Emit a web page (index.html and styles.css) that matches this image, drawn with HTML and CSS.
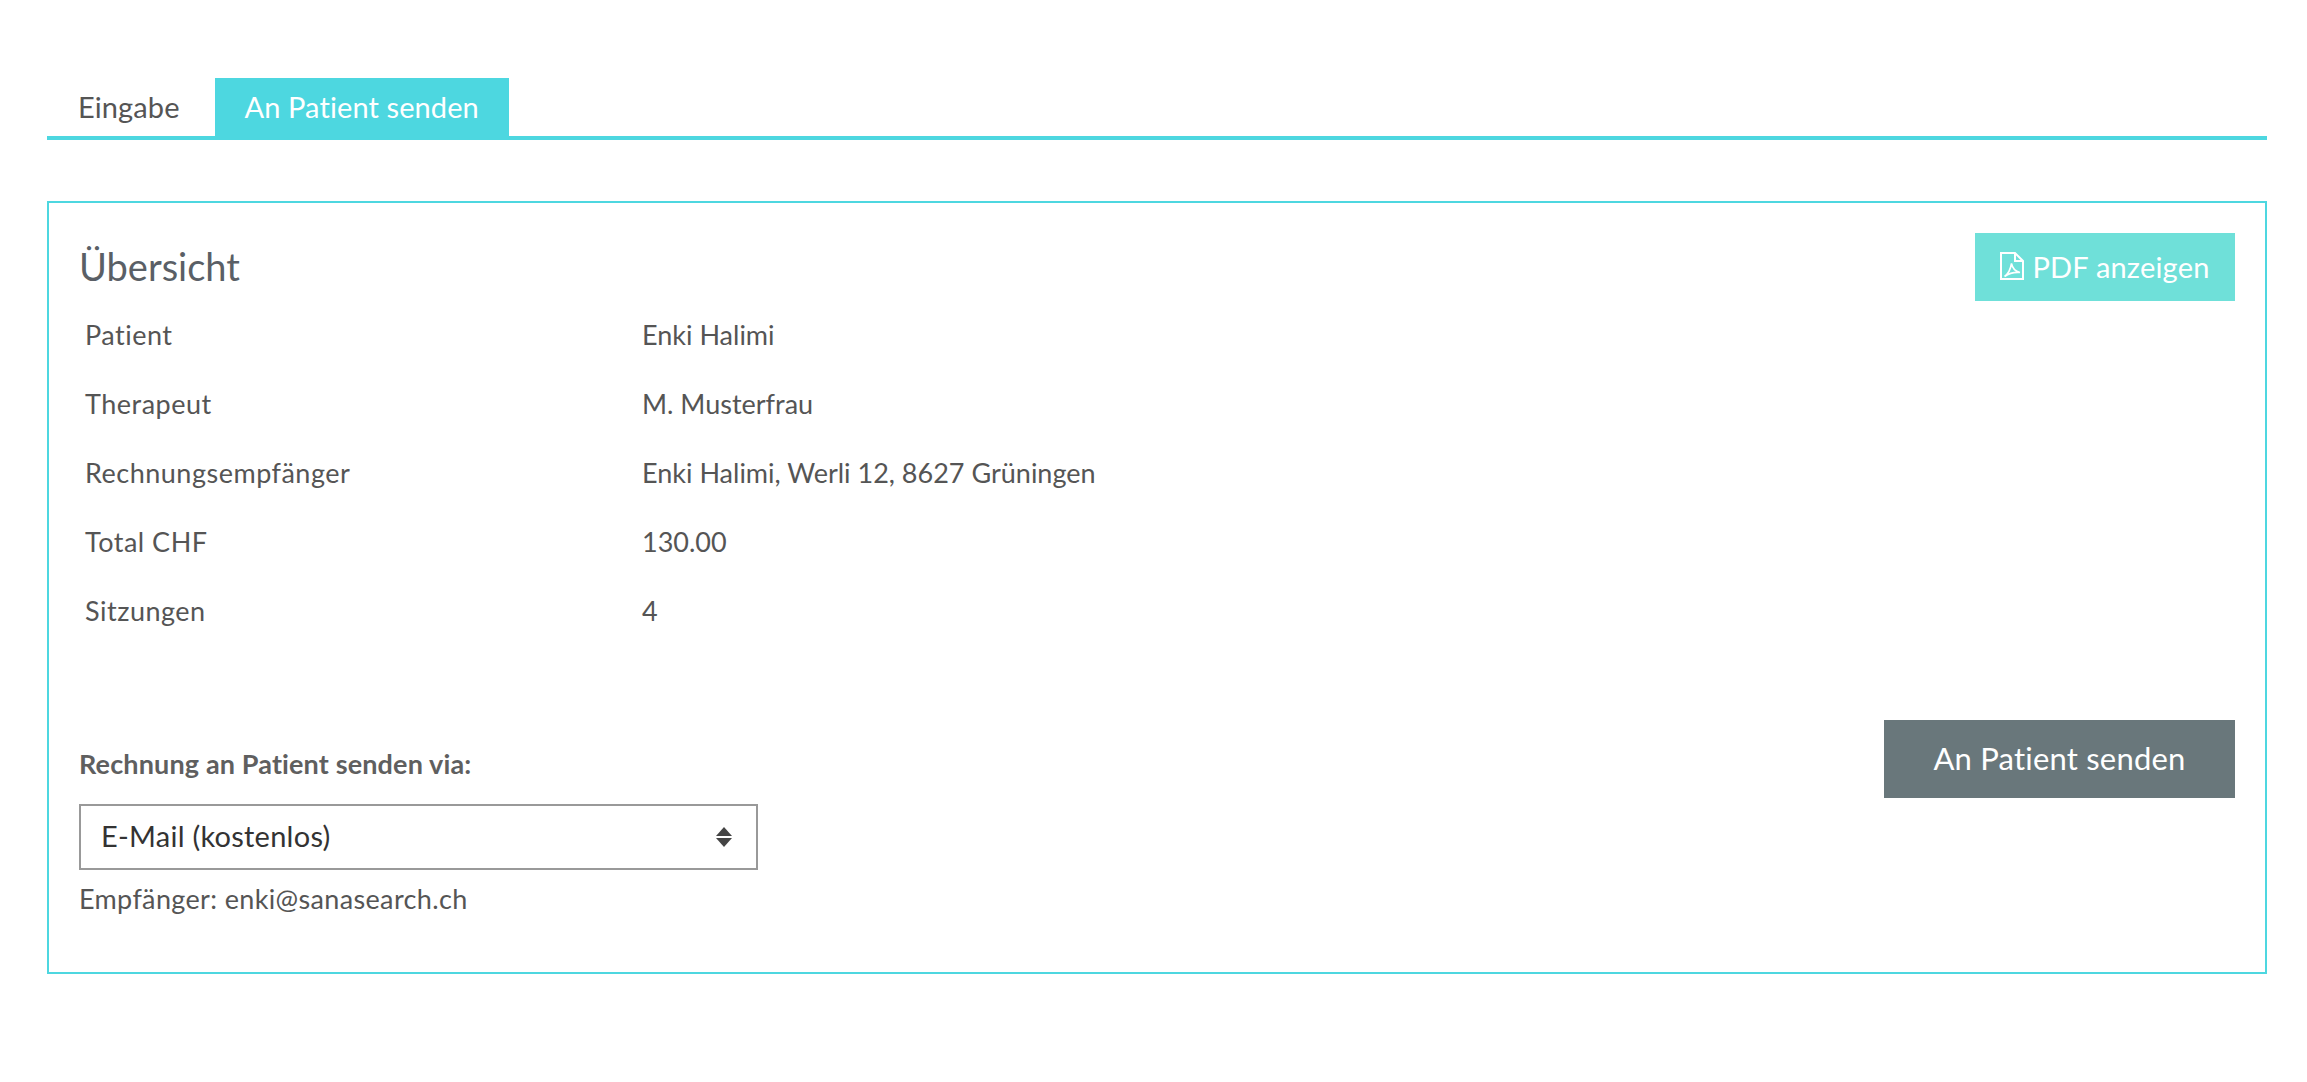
FILE: index.html
```html
<!DOCTYPE html>
<html lang="de">
<head>
<meta charset="utf-8">
<title>An Patient senden</title>
<link rel="stylesheet" href="styles.css">
</head>
<body>
<main class="page">
  <nav class="tabs">
    <a class="tab tab-first">Eingabe</a>
    <a class="tab tab-active">An Patient senden</a>
  </nav>
  <section class="panel">
    <header class="panel-head">
      <h2 class="panel-title">Übersicht</h2>
      <button class="btn-pdf" type="button">
        <svg class="pdf-icon" viewBox="0 0 24 28" width="24" height="28" fill="none" stroke="currentColor" stroke-width="2">
          <path d="M1 1H15L23 9V27H1Z"/>
          <path d="M15 1V9H23"/>
          <path d="M4.500 24.500C8 22 10.500 17.500 11.500 11.500C12.500 16.500 15.500 19.500 20 20.500C15 20 9.500 21 4.500 24.500Z" stroke-width="1.600"/>
        </svg>
        <span>PDF anzeigen</span>
      </button>
    </header>
    <dl class="summary">
      <div class="row"><dt>Patient</dt><dd>Enki Halimi</dd></div>
      <div class="row"><dt>Therapeut</dt><dd>M. Musterfrau</dd></div>
      <div class="row"><dt>Rechnungsempfänger</dt><dd>Enki Halimi, Werli 12, 8627 Grüningen</dd></div>
      <div class="row"><dt>Total CHF</dt><dd>130.00</dd></div>
      <div class="row"><dt>Sitzungen</dt><dd>4</dd></div>
    </dl>
    <div class="send">
      <div class="send-form">
        <label class="send-label" for="via">Rechnung an Patient senden via:</label>
        <div class="select-wrap">
          <select id="via" class="select"><option>E-Mail (kostenlos)</option></select>
          <span class="select-arrows"></span>
        </div>
        <p class="recipient">Empfänger: enki@sanasearch.ch</p>
      </div>
      <button class="btn-send" type="button">An Patient senden</button>
    </div>
  </section>
</main>
</body>
</html>
```
FILE: styles.css
```css
* { box-sizing: border-box; }
html, body { margin: 0; background: #fff; }
body {
  font-family: Lato, "Open Sans", sans-serif;
  font-size: 27px;
  font-variant-ligatures: none;
  color: #555;
}
.page { padding: 78px 40px 0 47px; }
.tabs {
  display: flex;
  height: 62px;
  border-bottom: 4px solid #4dd7e0;
}
.tab {
  height: 58px;
  line-height: 58px;
  padding: 0 30px;
  font-size: 29px;
  letter-spacing: .1px;
  color: #555;
}
.tab-first { padding: 0 35px 0 31px; }
.tab-active { background: #4dd7e0; color: #fff; }
.panel {
  margin-top: 61px;
  height: 773px;
  border: 2px solid #4dd7e0;
  padding: 30px;
}
.panel-head {
  display: flex;
  justify-content: space-between;
  align-items: center;
  height: 68px;
}
.panel-title {
  margin: 0;
  padding-bottom: 2px;
  font-size: 38px;
  font-weight: 400;
  color: #5a5f66;
}
.btn-pdf {
  display: flex;
  align-items: center;
  justify-content: center;
  gap: 8px;
  width: 260px;
  height: 68px;
  padding: 0 0 2px;
  border: 0;
  background: #6fe0d9;
  color: #fff;
  font: inherit;
  font-size: 29px;
  letter-spacing: .2px;
}
.pdf-icon { display: block; }
.summary { margin: 0; }
.row {
  display: flex;
  height: 69px;
  align-items: center;
  padding: 0 0 3px 6px;
}
.row dt { width: 557px; letter-spacing: .5px; }
.row dd { margin: 0; }
.send {
  display: flex;
  justify-content: space-between;
  align-items: flex-start;
  margin-top: 74px;
}
.send-form { padding-top: 26px; width: 679px; }
.send-label {
  display: block;
  height: 36px;
  line-height: 36px;
  font-weight: 700;
  letter-spacing: .14px;
  color: #5f5f5f;
  margin-bottom: 22px;
}
.select-wrap { position: relative; height: 66px; }
.select {
  appearance: none;
  display: block;
  width: 100%;
  height: 66px;
  padding: 0 20px 3px;
  border: 2px solid #999;
  border-radius: 0;
  background: #fff;
  font: inherit;
  font-size: 29px;
  letter-spacing: .25px;
  color: #333;
}
.select-arrows {
  position: absolute;
  right: 25px;
  top: 23px;
  width: 17px;
  height: 20px;
  pointer-events: none;
}
.select-arrows::before,
.select-arrows::after {
  content: "";
  position: absolute;
  left: 0;
  border-left: 8.500px solid transparent;
  border-right: 8.500px solid transparent;
}
.select-arrows::before { top: 0; border-bottom: 9px solid #444; }
.select-arrows::after { bottom: 0; border-top: 9px solid #444; }
.recipient {
  margin: 11px 0 0;
  height: 36px;
  line-height: 36px;
  letter-spacing: .35px;
}
.btn-send {
  width: 351px;
  height: 78px;
  padding: 0 0 3px;
  border: 0;
  background: #69777b;
  color: #fff;
  font: inherit;
  font-size: 31px;
  letter-spacing: .2px;
}
```
